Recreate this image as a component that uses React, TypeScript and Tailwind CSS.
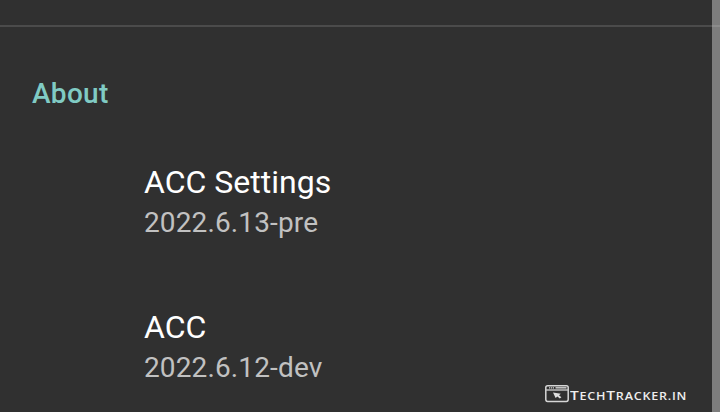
type Entry = { title: string; version: string };

const entries: Entry[] = [
  { title: 'ACC Settings', version: '2022.6.13-pre' },
  { title: 'ACC', version: '2022.6.12-dev' },
];

function BrowserIcon() {
  return (
    <svg width="24" height="18" viewBox="0 0 24 18" fill="none" className="shrink-0">
      <rect x="0.8" y="0.8" width="22.4" height="15.6" rx="1.8" stroke="#d6d6d6" strokeWidth="1.5" />
      <path d="M1 5H23" stroke="#c8c8c8" strokeWidth="1.4" />
      <path d="M4 2.8H9" stroke="#d6d6d6" strokeWidth="1.3" strokeDasharray="1.2 0.7" />
      <path d="M10.5 2.8H21.5" stroke="#c8c8c8" strokeWidth="1.5" />
      <path d="M8 7.5L15.8 8.7L14 10.2L16.4 12.2L14.8 13.5L12.4 11.6L10.6 13Z" fill="#dedede" />
    </svg>
  );
}

function Watermark() {
  return (
    <div className="absolute left-[545px] top-[385px] flex h-[18px] items-start text-[#eeeeee]">
      <BrowserIcon />
      <span className="ml-[1px] mt-[1px] origin-left scale-x-[1.195] whitespace-nowrap font-['Open_Sans',sans-serif] text-[13px] font-semibold leading-[19px] tracking-[0.65px]">
        T<span className="text-[10.5px]">ECH</span>T<span className="text-[10.5px]">RACKER.IN</span>
      </span>
    </div>
  );
}

export default function App() {
  return (
    <div className="relative flex h-[412px] w-[720px] overflow-hidden bg-[#303030] font-[Roboto,sans-serif]">
      <main className="w-[712px]">
        <div className="mt-[25px] h-[2px] bg-[#4b4b4b]" />
        <h2 className="ml-8 mt-[51px] text-[28px] font-medium leading-8 tracking-[0.3px] text-[#80cbc4]">About</h2>
        <div className="ml-36 mt-[52px] flex flex-col gap-[64px]">
          {entries.map((entry) => (
            <section key={entry.title}>
              <h3 className="text-[32px] leading-10 text-white">{entry.title}</h3>
              <p className="mt-px text-[28px] leading-10 tracking-[0.13px] text-[#c1c1c1]">{entry.version}</p>
            </section>
          ))}
        </div>
      </main>
      <aside className="w-2 bg-[#7d7d7d]">
        <div className="mt-[25px] h-[2px] bg-[#8c8c8c]" />
      </aside>
      <Watermark />
    </div>
  );
}
